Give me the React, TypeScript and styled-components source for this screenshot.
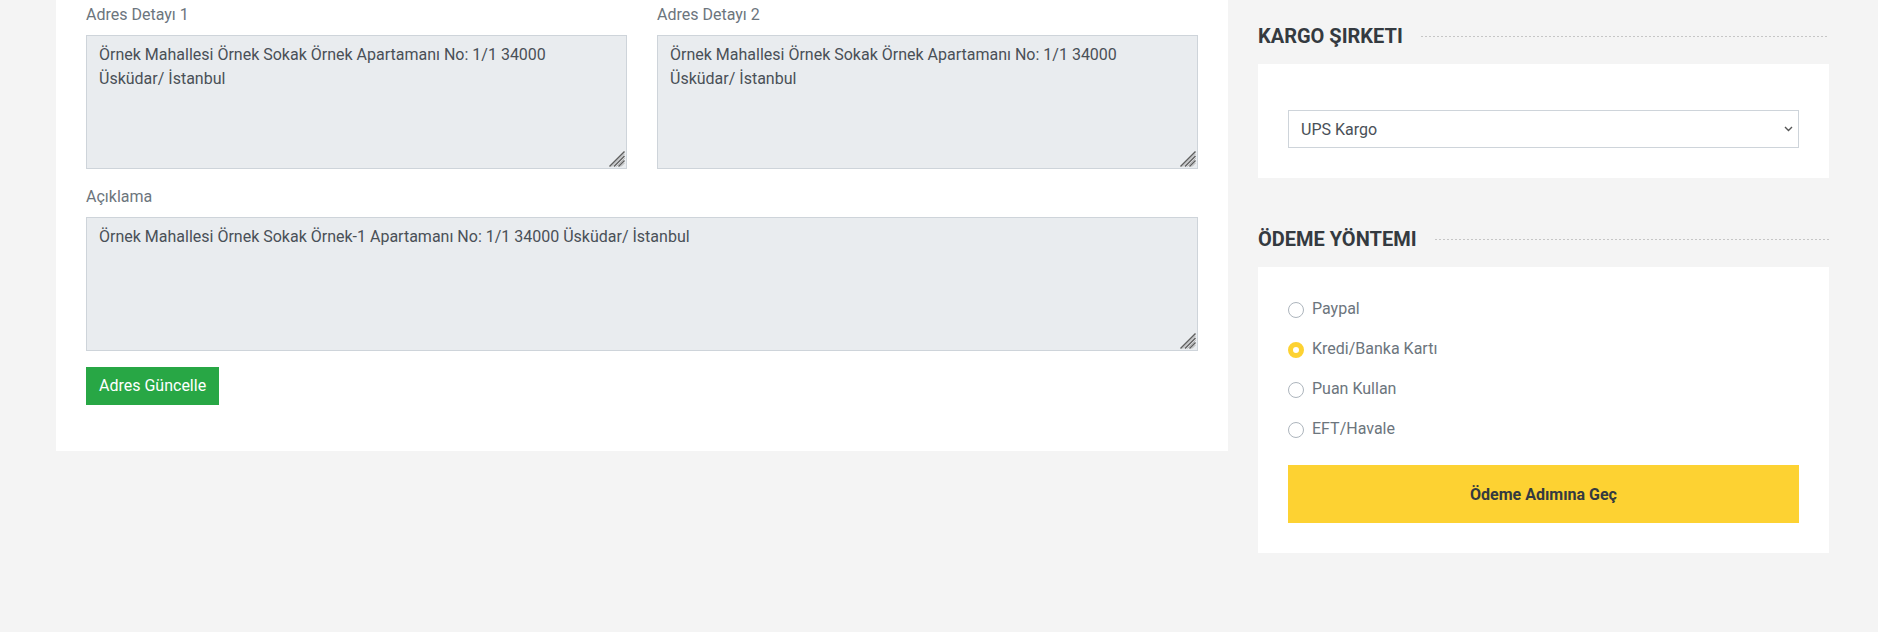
import React from "react";
import styled, { createGlobalStyle } from "styled-components";

const GlobalStyle = createGlobalStyle`
  html, body {
    margin: 0;
    padding: 0;
    background: #f4f4f4;
    font-family: Roboto, "Liberation Sans", Arial, sans-serif;
  }
  * { box-sizing: border-box; }
`;

const Page = styled.div`
  display: grid;
  grid-template-columns: 1172px 571px;
  column-gap: 30px;
  padding-left: 56px;
  align-items: start;
`;

const Panel = styled.div`
  background: #fff;
  padding: 3px 30px 30px;
`;

const Row = styled.div`
  display: grid;
  grid-template-columns: 1fr 1fr;
  column-gap: 30px;
`;

const FormGroup = styled.div`
  margin-bottom: 16px;
`;

const Label = styled.label`
  display: block;
  font-size: 16px;
  line-height: 24px;
  color: #6c757d;
  margin-bottom: 8px;
`;

const AreaWrap = styled.div`
  position: relative;
`;

const TextArea = styled.textarea`
  display: block;
  width: 100%;
  height: 134px;
  padding: 7px 12px;
  font-family: Roboto, "Liberation Sans", Arial, sans-serif;
  font-size: 16px;
  line-height: 24px;
  color: #495057;
  background: #e9ecef;
  border: 1px solid #ced4da;
  border-radius: 0;
  resize: none;
  outline: none;
`;

const Grip = styled.svg`
  position: absolute;
  right: 2px;
  bottom: 2px;
  width: 17px;
  height: 17px;
  pointer-events: none;
`;

const GreenButton = styled.button`
  display: inline-block;
  font-family: Roboto, "Liberation Sans", Arial, sans-serif;
  font-size: 16px;
  line-height: 24px;
  padding: 7px 13px;
  color: #fff;
  background: #28a745;
  border: 0;
  border-radius: 0;
  cursor: pointer;
`;

const Side = styled.div`
  display: flex;
  flex-direction: column;
`;

const Section = styled.section`
  margin-top: 25px;
  & + & {
    margin-top: 50px;
  }
`;

const SectionTitle = styled.h3`
  display: flex;
  align-items: center;
  margin: 0 0 16px;
  font-size: 20px;
  font-weight: 700;
  line-height: 23px;
  color: #343a40;
  text-transform: uppercase;
  white-space: nowrap;

  &::after {
    content: "";
    flex: 1;
    height: 1px;
    margin-left: 18px;
    background: repeating-linear-gradient(
      to right,
      #c6c6c6 0,
      #c6c6c6 2px,
      transparent 2px,
      transparent 4px
    );
  }
`;

const Card = styled.div`
  background: #fff;
  padding: 30px;
`;

const SelectWrap = styled.div`
  position: relative;
  margin-top: 16px;
`;

const Select = styled.select`
  display: block;
  width: 100%;
  height: 38px;
  padding: 0 30px 0 12px;
  font-family: Roboto, "Liberation Sans", Arial, sans-serif;
  font-size: 16px;
  color: #495057;
  background: #fff;
  border: 1px solid #ced4da;
  border-radius: 0;
  appearance: none;
  -webkit-appearance: none;
  outline: none;
`;

const Chevron = styled.svg`
  position: absolute;
  right: 6px;
  top: 16px;
  width: 9px;
  height: 6px;
  pointer-events: none;
`;

const RadioList = styled.div`
  display: flex;
  flex-direction: column;
  gap: 16px;
`;

const RadioRow = styled.label`
  display: flex;
  align-items: center;
  gap: 8px;
  font-size: 16px;
  line-height: 24px;
  color: #6c757d;
  cursor: pointer;
`;

const RadioDot = styled.span<{ $checked?: boolean }>`
  flex: none;
  width: 16px;
  height: 16px;
  margin-top: 1px;
  border-radius: 50%;
  background: #fff;
  border: ${(p) => (p.$checked ? "5px solid #fdd232" : "1px solid #adb5bd")};
`;

const YellowButton = styled.button`
  display: block;
  width: 100%;
  height: 58px;
  margin-top: 24px;
  font-family: Roboto, "Liberation Sans", Arial, sans-serif;
  font-size: 16px;
  font-weight: 700;
  color: #343a40;
  background: #fdd232;
  border: 0;
  border-radius: 0;
  cursor: pointer;
`;

const address = "Örnek Mahallesi Örnek Sokak Örnek Apartamanı No: 1/1 34000 Üsküdar/ İstanbul";
const note = "Örnek Mahallesi Örnek Sokak Örnek-1 Apartamanı No: 1/1 34000 Üsküdar/ İstanbul";

const payments = [
  { label: "Paypal", checked: false },
  { label: "Kredi/Banka Kartı", checked: true },
  { label: "Puan Kullan", checked: false },
  { label: "EFT/Havale", checked: false },
];

function ResizeGrip() {
  return (
    <Grip viewBox="0 0 17 17">
      <g stroke="#5f5f5f" strokeWidth="1.4" strokeLinecap="square">
        <path d="M2 16 L16 2" />
        <path d="M6.5 16 L16 6.5" />
        <path d="M11 16 L16 11" />
      </g>
      <g stroke="#a8a8a8" strokeWidth="0.9">
        <path d="M3.8 16.6 L16.6 3.8" />
        <path d="M8.3 16.6 L16.6 8.3" />
        <path d="M12.8 16.6 L16.6 12.8" />
      </g>
    </Grip>
  );
}

function Field({ label, value }: { label: string; value: string }) {
  return (
    <FormGroup>
      <Label>{label}</Label>
      <AreaWrap>
        <TextArea readOnly defaultValue={value} />
        <ResizeGrip />
      </AreaWrap>
    </FormGroup>
  );
}

export default function App() {
  return (
    <>
      <GlobalStyle />
      <Page>
        <Panel>
          <Row>
            <Field label="Adres Detayı 1" value={address} />
            <Field label="Adres Detayı 2" value={address} />
          </Row>
          <Field label="Açıklama" value={note} />
          <FormGroup>
            <GreenButton type="button">Adres Güncelle</GreenButton>
          </FormGroup>
        </Panel>
        <Side>
          <Section>
            <SectionTitle>Kargo Şirketi</SectionTitle>
            <Card>
              <SelectWrap>
                <Select defaultValue="ups">
                  <option value="ups">UPS Kargo</option>
                  <option value="yurtici">Yurtiçi Kargo</option>
                  <option value="aras">Aras Kargo</option>
                </Select>
                <Chevron viewBox="0 0 9 6">
                  <path d="M1 1 L4.5 4.5 L8 1" fill="none" stroke="#555" strokeWidth="1.4" />
                </Chevron>
              </SelectWrap>
            </Card>
          </Section>
          <Section>
            <SectionTitle>Ödeme Yöntemi</SectionTitle>
            <Card>
              <RadioList>
                {payments.map((p) => (
                  <RadioRow key={p.label}>
                    <RadioDot $checked={p.checked} />
                    {p.label}
                  </RadioRow>
                ))}
              </RadioList>
              <YellowButton type="button">Ödeme Adımına Geç</YellowButton>
            </Card>
          </Section>
        </Side>
      </Page>
    </>
  );
}
